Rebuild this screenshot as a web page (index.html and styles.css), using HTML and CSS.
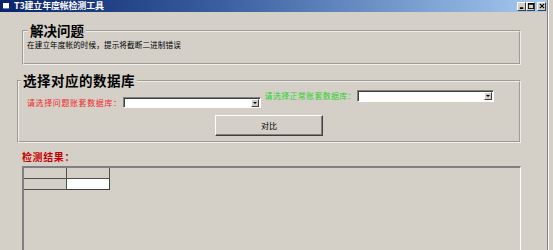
FILE: index.html
```html
<!DOCTYPE html>
<html lang="zh-CN">
<head>
    <meta charset="UTF-8">
    <title>T3建立年度帐检测工具</title>
    <link rel="stylesheet" href="styles.css">
</head>
<body>
    <div class="window">
        <div class="titlebar">
            <span class="app-icon"></span>
            <span class="caption">T3建立年度帐检测工具</span>
            <div class="caption-buttons">
                <span class="cbtn">
                    <svg width="7" height="7" viewBox="0 0 7 7"><rect x="1" y="5" width="4" height="2" fill="#000"/></svg>
                </span>
                <span class="cbtn">
                    <svg width="7" height="7" viewBox="0 0 7 7"><rect x="0.5" y="0.5" width="6" height="6" fill="none" stroke="#000"/><rect x="0" y="0" width="7" height="2" fill="#000"/></svg>
                </span>
                <span class="cbtn close">
                    <svg width="7" height="7" viewBox="0 0 7 7"><path d="M1 1 L6 6 M6 1 L1 6" stroke="#000" stroke-width="1.4"/></svg>
                </span>
            </div>
        </div>

        <div class="client">
            <fieldset class="group group-problem">
                <legend>解决问题</legend>
                <p class="desc">在建立年度帐的时候，提示将截断二进制错误</p>
            </fieldset>

            <fieldset class="group group-db">
                <legend>选择对应的数据库</legend>
                <div class="db-row">
                    <div class="pick pick-bad">
                        <label class="label-bad">请选择问题账套数据库：</label>
                        <div class="combo"><span class="combo-btn"></span></div>
                    </div>
                    <div class="pick pick-good">
                        <label class="label-good">请选择正常账套数据库：</label>
                        <div class="combo"><span class="combo-btn"></span></div>
                    </div>
                </div>
                <button class="btn">对比</button>
            </fieldset>

            <div class="result-title">检测结果：</div>
            <div class="grid">
                <table>
                    <tr><td></td><td></td></tr>
                    <tr><td></td><td class="cell-white"></td></tr>
                </table>
            </div>
        </div>
    </div>
</body>
</html>
```

FILE: styles.css
```css
body {
    margin: 0;
    padding: 0;
    background-color: #d4d0c8;
    font-family: "Noto Sans CJK SC", "Liberation Sans", sans-serif;
    overflow: hidden;
}

.window {
    width: 547px;
    height: 250px;
    border-right: 1px solid #808080;
    box-shadow: 1px 0 0 #ffffff;
    overflow: hidden;
}

.titlebar {
    height: 12px;
    display: flex;
    align-items: center;
    background: linear-gradient(to right, #0a246a, #3a5ea0 40%, #a6caf0);
    padding-left: 3px;
}

.app-icon {
    width: 6px;
    height: 5px;
    background-color: #ffffff;
    border-bottom: 1px solid #6080c0;
    margin-right: 5px;
}

.caption {
    color: #ffffff;
    font-size: 9px;
    font-weight: bold;
    line-height: 12px;
    letter-spacing: -0.2px;
}

.caption-buttons {
    margin-left: auto;
    display: flex;
    margin-right: 1px;
}

.cbtn {
    width: 9px;
    height: 9px;
    background-color: #d4d0c8;
    border: 1px solid;
    border-color: #ffffff #404040 #404040 #ffffff;
    box-sizing: border-box;
    display: flex;
    align-items: center;
    justify-content: center;
}

.cbtn svg {
    display: block;
    width: 6px;
    height: 6px;
}

.cbtn.close {
    margin-left: 2px;
}

.client {
    display: flex;
    flex-direction: column;
}

.group {
    margin: 0;
    padding: 0;
    border: 2px groove #f0eee8;
    box-sizing: border-box;
    min-inline-size: 0;
}

.group legend {
    padding: 0 2px;
    font-size: 13.5px;
    font-weight: bold;
    line-height: 15px;
    color: #000;
}

.group-problem {
    margin-top: 11px;
    margin-left: 22px;
    width: 499px;
    height: 42px;
    padding-left: 3px;
}

.group-problem legend {
    margin-left: 1px;
}

.desc {
    margin: 2px 0 0 0;
    font-size: 7.6px;
    line-height: 10px;
    letter-spacing: 0.1px;
    color: #000;
}

.group-db {
    margin-top: 8px;
    margin-left: 17px;
    width: 504px;
    height: 70px;
}

.group-db legend {
    margin-left: 2px;
    letter-spacing: 0.5px;
}

.db-row {
    display: flex;
    align-items: flex-start;
    margin-top: 2px;
}

.pick {
    display: flex;
    align-items: center;
}

.pick-bad {
    margin-left: 8px;
    margin-top: 7px;
}

.pick-good {
    margin-left: 4px;
}

.label-bad, .label-good {
    font-size: 8px;
    line-height: 10px;
    letter-spacing: 0.6px;
    margin-right: 1px;
}

.label-bad {
    color: #f02828;
}

.label-good {
    color: #2ed02e;
    letter-spacing: 0.3px;
}

.combo {
    width: 138px;
    height: 11px;
    background-color: #ffffff;
    border: 1px solid;
    border-color: #808080 #ffffff #ffffff #808080;
    box-shadow: inset 1px 1px 0 #404040;
    box-sizing: border-box;
    display: flex;
    justify-content: flex-end;
    align-items: center;
    padding-right: 1px;
}

.pick-good .combo {
    width: 137px;
    height: 12px;
}

.combo-btn {
    width: 8px;
    height: 8px;
    background-color: #d4d0c8;
    border: 1px solid;
    border-color: #ffffff #404040 #404040 #ffffff;
    box-sizing: border-box;
    display: flex;
    align-items: center;
    justify-content: center;
}

.combo-btn::after {
    content: "";
    border-left: 2px solid transparent;
    border-right: 2px solid transparent;
    border-top: 2px solid #000;
}

.btn {
    margin-left: 196px;
    margin-top: 7px;
    width: 108px;
    height: 21px;
    background-color: #d4d0c8;
    border: 1px solid;
    border-color: #ffffff #404040 #404040 #ffffff;
    box-shadow: inset -1px -1px 0 #808080;
    font-family: "Noto Sans CJK SC", sans-serif;
    font-size: 8px;
    color: #000;
    padding: 0;
}

.result-title {
    margin-top: 8px;
    margin-left: 22px;
    font-size: 10px;
    font-weight: bold;
    line-height: 12px;
    letter-spacing: 0.6px;
    color: #c80000;
}

.grid {
    margin-top: 3px;
    margin-left: 22px;
    width: 499px;
    height: 90px;
    border-top: 2px solid #808080;
    border-left: 2px solid #808080;
    border-right: 1px solid #ffffff;
    box-sizing: border-box;
}

.grid table {
    border-collapse: collapse;
}

.grid td {
    width: 42px;
    height: 10px;
    padding: 0;
    border: 1px solid #505050;
    border-top-color: #808080;
    border-left-color: #808080;
    background-color: #d4d0c8;
}

.grid tr:first-child td {
    border-top: none;
}

.grid td:first-child {
    border-left: none;
}

.grid td.cell-white {
    background-color: #ffffff;
    border-right: 1px solid #404040;
    border-bottom: 1px solid #404040;
}
```
